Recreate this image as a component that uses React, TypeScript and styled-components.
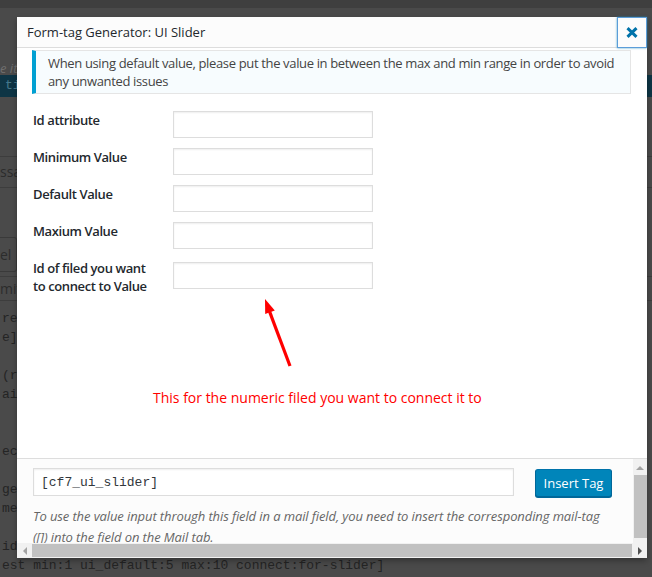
import React from "react";
import styled, { createGlobalStyle } from "styled-components";

const GlobalStyle = createGlobalStyle`
  html, body { margin: 0; padding: 0; background: #4a4a4a; }
  body { font-family: "Open Sans", "Noto Sans", sans-serif; }
  *, *::before, *::after { box-sizing: border-box; }
`;

const UI_FONT = `"Open Sans", "Noto Sans", sans-serif`;
const MONO_FONT = `"Liberation Mono", "DejaVu Sans Mono", monospace`;

const Screen = styled.div`
  position: relative;
  width: 652px;
  height: 577px;
  overflow: hidden;
  background: #4a4a4a;
`;

/* ---------- dimmed admin page behind the dialog ---------- */
const Backdrop = styled.div`
  display: flex;
  flex-direction: column;
  width: 100%;
  height: 100%;
  white-space: nowrap;
`;
const AdminBar = styled.div`
  flex-shrink: 0;
  height: 8px;
  background: #3f3f3f;
`;
const EdgeText = styled.div`
  width: 17px;
  overflow: hidden;
`;
const BgHint = styled.div`
  margin-top: 53px;
  height: 14px;
  font: italic 13px/14px ${UI_FONT};
  color: #6f6f6f;
`;
const BgTeal = styled.div`
  height: 22px;
  padding-left: 5px;
  background: #0e3545;
  color: #45788c;
  font: 13px/22px ${MONO_FONT};
`;
const BgTabs = styled.div`
  margin-top: 59px;
  height: 32px;
  border-top: 1px solid #3d3d3d;
  border-bottom: 1px solid #3d3d3d;
  font: 14px/30px ${UI_FONT};
  color: #2c2c2c;
`;
const BgButton = styled.div`
  margin-top: 49px;
  width: 17px;
  height: 35px;
  border: 1px solid #3a3a3a;
  border-left: none;
  border-radius: 0 3px 3px 0;
  font: 14px/33px ${UI_FONT};
  color: #2c2c2c;
  overflow: hidden;
`;
const BgSubmit = styled.div`
  margin-top: 4px;
  height: 24px;
  border-top: 1px solid #3d3d3d;
  font: 14px/24px ${UI_FONT};
  color: #2c2c2c;
`;
const BgCode = styled.div`
  padding-top: 8px;
  border-top: 1px solid #3d3d3d;
  font: 13px/19px ${MONO_FONT};
  color: #242424;
`;
const BgCodeLine = styled.div<{ $full?: boolean }>`
  height: 19px;
  padding-left: 2px;
  width: ${(p) => (p.$full ? "auto" : "17px")};
  overflow: hidden;
`;

const codeLines = [
  "re",
  "e]",
  "",
  "(r",
  "ai",
  "",
  "",
  "ec",
  "",
  "ge",
  "me",
  "",
  "id",
  "est min:1 ui_default:5 max:10 connect:for-slider]",
];

/* ---------- dialog ---------- */
const Modal = styled.div`
  position: absolute;
  left: 17px;
  top: 17px;
  width: 630px;
  height: 541px;
  display: flex;
  flex-direction: column;
  background: #fff;
  box-shadow: 0 3px 6px rgba(0, 0, 0, 0.3);
  font-family: ${UI_FONT};
  color: #23282d;
`;

const Header = styled.div`
  flex-shrink: 0;
  height: 31px;
  display: flex;
  align-items: stretch;
  justify-content: space-between;
  background: #fcfcfc;
  border-bottom: 1px solid #ddd;
`;
const Title = styled.div`
  padding-left: 10px;
  font-size: 13px;
  line-height: 30px;
  color: #23282d;
`;
const CloseButton = styled.button`
  width: 30px;
  height: 31px;
  margin: 0;
  padding: 0;
  display: flex;
  align-items: center;
  justify-content: center;
  background: #fcfcfc;
  border: 1px solid #5b9dd9;
  box-shadow: 0 0 2px rgba(30, 140, 190, 0.8);
  color: #0073aa;
  cursor: pointer;
`;

const Body = styled.div`
  flex: 1;
  min-height: 0;
  overflow: hidden;
  padding: 2px 16px 0 15px;
  display: flex;
  flex-direction: column;
`;

const Notice = styled.div`
  padding: 3px 12px;
  background: #f7fcfe;
  border: 1px solid #e5e5e5;
  border-left: 4px solid #00a0d2;
  font-size: 13px;
  letter-spacing: -0.35px;
  line-height: 18px;
  color: #444;
  white-space: nowrap;
`;

const Fields = styled.div`
  margin-top: 17px;
  display: flex;
  flex-direction: column;
`;
const FieldRow = styled.div<{ $tall?: boolean }>`
  display: grid;
  grid-template-columns: 141px 200px;
  align-items: start;
  height: ${(p) => (p.$tall ? "auto" : "37px")};
`;
const Label = styled.label`
  padding-left: 1px;
  font-size: 13px;
  font-weight: 600;
  letter-spacing: -0.4px;
  line-height: 18px;
  color: #23282d;
`;
const TextInput = styled.input<{ $drop?: number }>`
  width: 200px;
  height: 27px;
  margin: ${(p) => p.$drop ?? 0}px 0 0;
  padding: 3px 5px;
  background: #fff;
  border: 1px solid #ddd;
  box-shadow: inset 0 1px 2px rgba(0, 0, 0, 0.07);
  font: 14px ${UI_FONT};
  outline: none;
`;

const Annotation = styled.div`
  display: flex;
  flex-direction: column;
`;
const ArrowSvg = styled.svg`
  display: block;
  margin-left: 223px;
`;
const Note = styled.div`
  margin: 19px 0 0 121px;
  font-size: 14px;
  line-height: 20px;
  color: #f00;
`;

const Footer = styled.div`
  flex-shrink: 0;
  height: 100px;
  display: flex;
  flex-direction: column;
  background: #fcfcfc;
  border-top: 1px solid #ddd;
`;
const FooterMain = styled.div`
  flex: 1;
  min-height: 0;
  display: flex;
`;
const FooterContent = styled.div`
  flex: 1;
  min-width: 0;
  overflow: hidden;
  padding: 9px 21px 0 16px;
`;
const TagRow = styled.div`
  display: flex;
  align-items: flex-start;
  gap: 21px;
`;
const TagInput = styled.input`
  flex: 1;
  height: 28px;
  padding: 2px 7px;
  background: #fff;
  border: 1px solid #ddd;
  box-shadow: inset 0 1px 2px rgba(0, 0, 0, 0.07);
  font: 13px ${MONO_FONT};
  color: #32373c;
  outline: none;
`;
const InsertButton = styled.button`
  flex-shrink: 0;
  width: 77px;
  height: 28px;
  margin-top: 1px;
  padding: 0 0 1px;
  background: #0085ba;
  border: 1px solid #0073aa;
  border-color: #0073aa #006799 #006799;
  border-radius: 3px;
  box-shadow: 0 1px 0 #006799;
  font: 13px/26px ${UI_FONT};
  color: #fff;
  cursor: pointer;
`;
const Hint = styled.p`
  margin: 9px 0 0;
  font-size: 13px;
  font-style: italic;
  letter-spacing: -0.1px;
  line-height: 21px;
  color: #666;
  white-space: nowrap;
`;

const VScroll = styled.div`
  flex-shrink: 0;
  width: 14px;
  display: flex;
  flex-direction: column;
  align-items: center;
  background: #f1f1f1;
`;
const ScrollArrow = styled.div<{ $dir: "up" | "left" | "right"; $active?: boolean }>`
  flex-shrink: 0;
  width: 0;
  height: 0;
  border: 4px solid transparent;
  ${(p) =>
    p.$dir === "up"
      ? `border-bottom: 4px solid ${p.$active ? "#505050" : "#a3a3a3"}; border-top-width: 0; margin: 7px 0 5px;`
      : p.$dir === "left"
      ? `border-right: 4px solid ${p.$active ? "#505050" : "#a3a3a3"}; border-left-width: 0; margin: 0 5px 0 6px;`
      : `border-left: 4px solid ${p.$active ? "#505050" : "#a3a3a3"}; border-right-width: 0; margin: 0 5px 0 6px;`}
`;
const VThumb = styled.div`
  width: 13px;
  margin-left: 1px;
  height: 63px;
  background: #c1c1c1;
`;
const HScroll = styled.div`
  flex-shrink: 0;
  height: 15px;
  display: flex;
  align-items: center;
  background: #f1f1f1;
`;
const HThumb = styled.div`
  flex: 1;
  height: 13px;
  background: #c1c1c1;
`;

const fields = ["Id attribute", "Minimum Value", "Default Value", "Maxium Value"];

export default function App() {
  return (
    <>
      <GlobalStyle />
      <Screen>
        <Backdrop>
          <AdminBar />
          <BgHint>
            <EdgeText>e it</EdgeText>
          </BgHint>
          <BgTeal>
            <EdgeText>ti</EdgeText>
          </BgTeal>
          <BgTabs>
            <EdgeText>ssa</EdgeText>
          </BgTabs>
          <BgButton>el</BgButton>
          <BgSubmit>
            <EdgeText>mit</EdgeText>
          </BgSubmit>
          <BgCode>
            {codeLines.map((line, i) => (
              <BgCodeLine key={i} $full={i === codeLines.length - 1}>
                {line}
              </BgCodeLine>
            ))}
          </BgCode>
        </Backdrop>

        <Modal>
          <Header>
            <Title>Form-tag Generator: UI Slider</Title>
            <CloseButton aria-label="Close">
              <svg width="12" height="11" viewBox="0 0 12 11">
                <path d="M1.5 1.2 L10.5 9.8 M10.5 1.2 L1.5 9.8" stroke="currentColor" strokeWidth="3" />
              </svg>
            </CloseButton>
          </Header>

          <Body>
            <Notice>
              When using default value, please put the value in between the max and min range in order to avoid
              <br />
              any unwanted issues
            </Notice>

            <Fields>
              {fields.map((f) => (
                <FieldRow key={f}>
                  <Label>{f}</Label>
                  <TextInput type="text" />
                </FieldRow>
              ))}
              <FieldRow $tall>
                <Label>
                  Id of filed you want
                  <br />
                  to connect to Value
                </Label>
                <TextInput type="text" $drop={3} />
              </FieldRow>
            </Fields>

            <Annotation>
              <ArrowSvg width="42" height="74" viewBox="0 0 42 74">
                <line x1="35" y1="71" x2="14.6" y2="16.6" stroke="#f00" strokeWidth="3.2" />
                <polygon points="10,4 19.8,15.4 10.2,18.9" fill="#f00" />
              </ArrowSvg>
              <Note>This for the numeric filed you want to connect it to</Note>
            </Annotation>
          </Body>

          <Footer>
            <FooterMain>
              <FooterContent>
                <TagRow>
                  <TagInput type="text" readOnly value="[cf7_ui_slider]" />
                  <InsertButton>Insert Tag</InsertButton>
                </TagRow>
                <Hint>
                  To use the value input through this field in a mail field, you need to insert the corresponding
                  mail-tag
                  <br />
                  ([]) into the field on the Mail tab.
                </Hint>
              </FooterContent>
              <VScroll>
                <ScrollArrow $dir="up" />
                <VThumb />
              </VScroll>
            </FooterMain>
            <HScroll>
              <ScrollArrow $dir="left" />
              <HThumb />
              <ScrollArrow $dir="right" $active />
            </HScroll>
          </Footer>
        </Modal>
      </Screen>
    </>
  );
}
